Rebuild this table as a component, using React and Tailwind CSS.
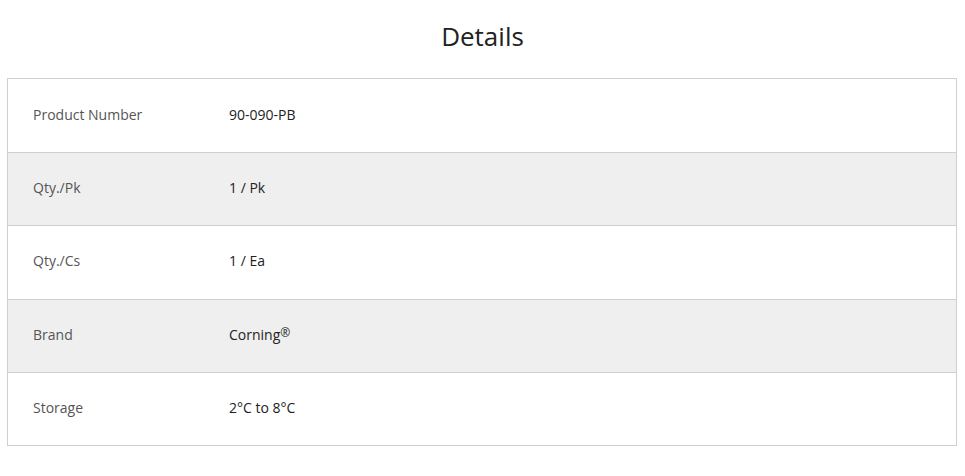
const rows = [
  { label: "Product Number", value: "90-090-PB" },
  { label: "Qty./Pk", value: "1 / Pk" },
  { label: "Qty./Cs", value: "1 / Ea" },
  {
    label: "Brand",
    value: (
      <>
        Corning<span className="relative -top-[3px] text-[12px]">®</span>
      </>
    ),
  },
  { label: "Storage", value: "2°C to 8°C" },
];

export default function App() {
  return (
    <div className="min-h-[476px] bg-white font-['Open_Sans',sans-serif]">
      <h2 className="pt-[18px] pb-[24px] text-center text-[26px] leading-[36px] text-[#222]">Details</h2>
      <div className="ml-[7px] mr-[8px] border border-[#cfcfcf]">
        {rows.map((row, idx) => (
          <div
            key={row.label}
            className={[
              "flex h-[73.2px] items-center pb-[3px] text-[14px]",
              idx > 0 ? "border-t border-[#cfcfcf]" : "",
              idx % 2 === 1 ? "bg-[#efefef]" : "bg-white",
            ].join(" ")}
          >
            <div className="w-[221px] pl-[25px] text-[#555]">{row.label}</div>
            <div className="text-[#222]">{row.value}</div>
          </div>
        ))}
      </div>
    </div>
  );
}
